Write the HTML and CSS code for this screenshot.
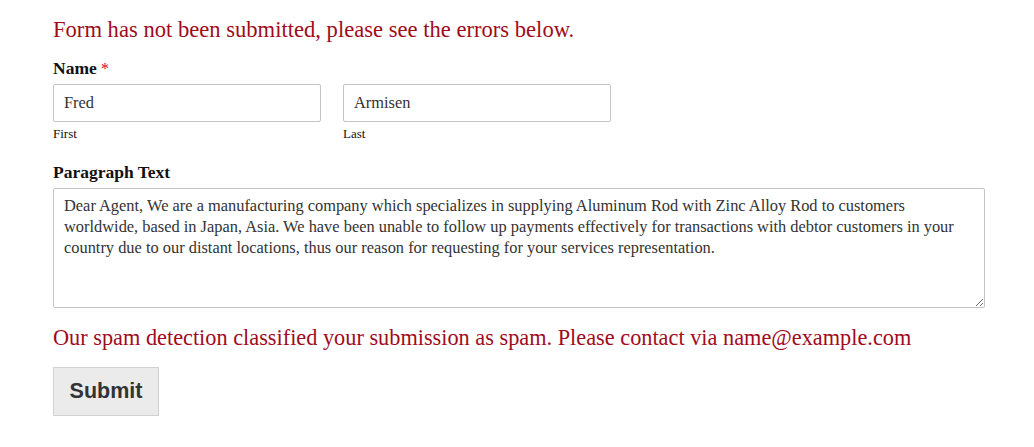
FILE: index.html
```html
<!DOCTYPE html>
<html lang="en">
<head>
<meta charset="utf-8">
<title>Form</title>
<link rel="stylesheet" href="styles.css">
</head>
<body>
<form class="form">
  <div class="form-error">Form has not been submitted, please see the errors below.</div>
  <div class="field field-name">
    <div class="label">Name <span class="req">*</span></div>
    <div class="name-row">
      <div class="name-part">
        <input class="text-input" type="text" value="Fred">
        <span class="sublabel">First</span>
      </div>
      <div class="name-part">
        <input class="text-input" type="text" value="Armisen">
        <span class="sublabel">Last</span>
      </div>
    </div>
  </div>
  <div class="field">
    <div class="label label-para">Paragraph Text</div>
    <textarea class="textarea">Dear Agent, We are a manufacturing company which specializes in supplying Aluminum Rod with Zinc Alloy Rod to customers
worldwide, based in Japan, Asia. We have been unable to follow up payments effectively for transactions with debtor customers in your
country due to our distant locations, thus our reason for requesting for your services representation.</textarea>
  </div>
  <div class="spam-error">Our spam detection classified your submission as spam. Please contact via name@example.com</div>
  <div class="actions">
    <button type="button" class="submit">Submit</button>
  </div>
</form>
</body>
</html>
```

FILE: styles.css
```css
html, body {
  margin: 0;
  padding: 0;
  background: #ffffff;
}
body {
  font-family: "Liberation Serif", "Times New Roman", serif;
  color: #111;
}
.form {
  display: flex;
  flex-direction: column;
  padding: 16px 49px 0 53px;
}
.form-error {
  color: #a00b1c;
  font-size: 22.6px;
  line-height: 28px;
  margin-bottom: 14px;
}
.field {
  display: flex;
  flex-direction: column;
  margin-bottom: 13px;
}
.field-name {
  margin-bottom: 20px;
}
.label {
  font-weight: bold;
  font-size: 17.5px;
  line-height: 20px;
  color: #111;
  margin-bottom: 5px;
}
.label-para {
  margin-bottom: 6px;
}
.req {
  color: #e0001b;
  font-weight: normal;
  font-size: 16px;
}
.name-row {
  display: flex;
  gap: 22px;
}
.name-part {
  display: flex;
  flex-direction: column;
  width: 268px;
}
.text-input {
  box-sizing: border-box;
  width: 268px;
  height: 38px;
  border: 1px solid #c4c4c4;
  border-radius: 2px;
  padding: 0 10px;
  font-family: "Liberation Serif", "Times New Roman", serif;
  font-size: 16.4px;
  color: #333;
  margin: 0;
}
.sublabel {
  font-size: 13px;
  line-height: 16px;
  margin-top: 4px;
  color: #111;
}
.textarea {
  box-sizing: border-box;
  width: 932px;
  height: 120px;
  border: 1px solid #c4c4c4;
  border-radius: 2px;
  padding: 6px 10px;
  margin: 0;
  font-family: "Liberation Serif", "Times New Roman", serif;
  font-size: 16.4px;
  line-height: 21px;
  color: #333;
  resize: both;
  white-space: pre-wrap;
}
.spam-error {
  color: #a00b1c;
  font-size: 22.3px;
  line-height: 28px;
  margin-top: 3px;
  margin-bottom: 15px;
}
.actions {
  display: flex;
}
.submit {
  box-sizing: border-box;
  height: 49px;
  width: 106px;
  background: #ebebeb;
  border: 1px solid #d2d2d2;
  border-radius: 0;
  font-family: "Liberation Sans", Arial, sans-serif;
  font-weight: bold;
  font-size: 21.5px;
  color: #333;
  padding: 0;
}
```
